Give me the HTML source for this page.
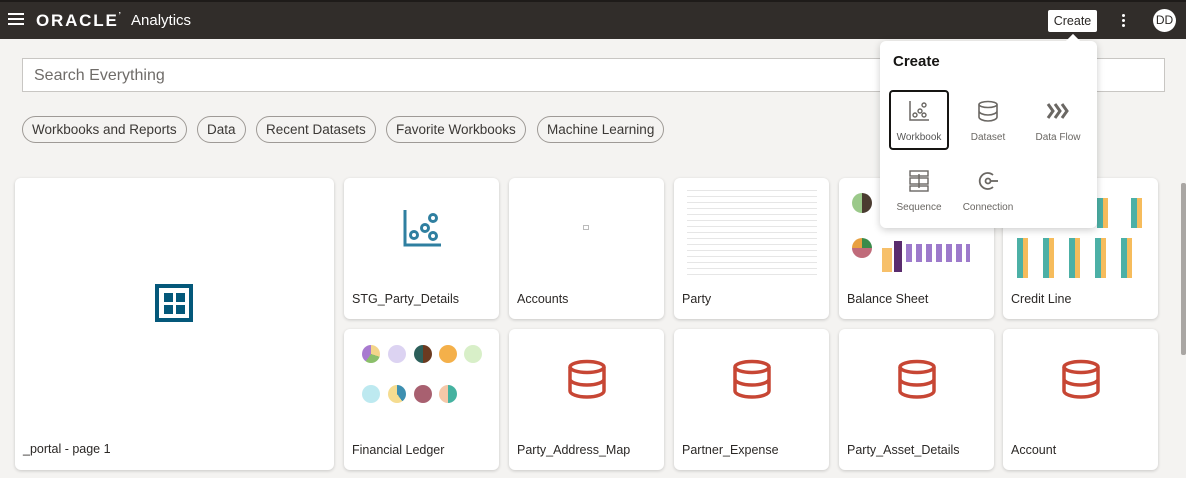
<!DOCTYPE html>
<html><head><meta charset="utf-8"><style>
*{box-sizing:border-box;margin:0;padding:0}
body{width:1186px;height:478px;overflow:hidden;background:#f4f3f1;font-family:"Liberation Sans",sans-serif;position:relative;color:#161513}
.abs{position:absolute}
.hdr{left:0;top:0;width:1186px;height:39px;background:#312d2a;border-top:2px solid #1e1b19}
.search{left:22px;top:58px;width:1143px;height:34px;background:#fff;border:1px solid #c8c6c3;font-size:16px;color:#6f6c69;padding:8px 11px}
.chip{top:116px;height:27px;border:1px solid #9e9a96;border-radius:14px;font-size:13.5px;color:#3b3835;padding:5px 9px;background:#f4f3f1;white-space:nowrap}
.card{background:#fff;border-radius:6px;box-shadow:0 1px 3px rgba(0,0,0,.18)}
.lbl{position:absolute;left:8px;font-size:12.5px;color:#2b2826}
.sm .lbl{top:114px}
.pop{left:880px;top:41px;width:217px;height:187px;background:#fff;border-radius:6px;box-shadow:0 2px 8px rgba(0,0,0,.2)}
.tile{position:absolute;width:60px;height:60px;text-align:center;font-size:10px;color:#6a6763}
.tile svg{display:block;margin:10px auto 10px}
</style></head><body>
<div class="abs hdr">
 <div class="abs" style="left:8px;top:11px;width:16px;height:2px;background:#fff;box-shadow:0 5px 0 #fff,0 10px 0 #fff"></div>
 <div class="abs" style="left:36px;top:9px;color:#fff;font-size:17px;font-weight:bold;letter-spacing:1.8px">ORACLE<span style="font-size:8px;vertical-align:top">’</span></div>
 <div class="abs" style="left:131px;top:10px;color:#fff;font-size:15px">Analytics</div>
 <div class="abs" style="left:1048px;top:8px;width:49px;height:22px;background:#fff;border-radius:2px;font-size:12.5px;color:#2b2826;text-align:center;line-height:22px">Create</div>
 <div class="abs" style="left:1122px;top:12px;width:3px;height:3px;background:#fff;border-radius:2px;box-shadow:0 5px 0 #fff,0 10px 0 #fff"></div>
 <div class="abs" style="left:1153px;top:7px;width:23px;height:23px;background:#fff;border-radius:50%;font-size:12px;text-align:center;line-height:23px;color:#2b2826">DD</div>
</div>
<div class="abs search">Search Everything</div>
<div class="abs chip" style="left:22px">Workbooks and Reports</div>
<div class="abs chip" style="left:197px">Data</div>
<div class="abs chip" style="left:256px">Recent Datasets</div>
<div class="abs chip" style="left:386px">Favorite Workbooks</div>
<div class="abs chip" style="left:537px">Machine Learning</div>

<div class="abs card" style="left:15px;top:178px;width:319px;height:292px">
 <svg class="abs" style="left:140px;top:106px" width="39" height="38"><rect x="2" y="2" width="34" height="34" fill="none" stroke="#04587a" stroke-width="4"/><rect x="9" y="9" width="9" height="9" fill="#04587a"/><rect x="21" y="9" width="9" height="9" fill="#04587a"/><rect x="9" y="21" width="9" height="9" fill="#04587a"/><rect x="21" y="21" width="9" height="9" fill="#04587a"/></svg>
 <div class="lbl" style="top:264px">_portal - page 1</div>
</div>

<div class="abs card sm" style="left:344px;top:178px;width:155px;height:141px">
 <svg class="abs" style="left:58px;top:30px" width="40" height="40"><path d="M3 2V37H39" fill="none" stroke="#2f7fa0" stroke-width="3"/><g fill="none" stroke="#2f7fa0" stroke-width="3"><circle cx="12" cy="27" r="3.5"/><circle cx="23" cy="20" r="3.5"/><circle cx="31" cy="10" r="3.5"/><circle cx="31" cy="28" r="3.5"/></g></svg>
 <div class="lbl">STG_Party_Details</div></div>
<div class="abs card sm" style="left:509px;top:178px;width:155px;height:141px">
 <div class="abs" style="left:74px;top:47px;width:6px;height:5px;border:1px solid #bbb"></div>
 <div class="lbl">Accounts</div></div>
<div class="abs card sm" style="left:674px;top:178px;width:155px;height:141px">
 <div class="abs" style="left:13px;top:7px;width:130px;height:92px;background:repeating-linear-gradient(#fff 0 5px,#e6e6e6 5px 6px)"></div>
 <div class="lbl">Party</div></div>
<div class="abs card sm" style="left:839px;top:178px;width:155px;height:141px">
 <div class="abs" style="left:13px;top:15px;width:20px;height:20px;border-radius:50%;background:conic-gradient(#4a3b30 0 50%,#9bc98a 0)"></div>
 <div class="abs" style="left:13px;top:60px;width:20px;height:20px;border-radius:50%;background:conic-gradient(#3a8b4a 0 25%,#c06b7a 0 75%,#e8a040 0)"></div>
 <div class="abs" style="left:43px;top:70px;width:10px;height:24px;background:#f7c06a"></div>
 <div class="abs" style="left:55px;top:63px;width:8px;height:31px;background:#5a2c6e"></div>
 <div class="abs" style="left:67px;top:66px;width:64px;height:18px;background:repeating-linear-gradient(90deg,#9d7acb 0 6px,transparent 6px 10px)"></div>
 <div class="lbl">Balance Sheet</div></div>
<div class="abs card sm" style="left:1003px;top:178px;width:155px;height:141px">
 <div class="abs" style="left:14px;top:60px;width:130px;height:40px;background:repeating-linear-gradient(90deg,#4cb0a6 0 6px,#f6bc5c 6px 11px,transparent 11px 26px)"></div>
 <div class="abs" style="left:14px;top:20px;width:130px;height:30px;background:repeating-linear-gradient(90deg,transparent 0 12px,#4cb0a6 12px 18px,#f6bc5c 18px 23px,transparent 23px 34px)"></div>
 <div class="lbl">Credit Line</div></div>

<div class="abs card sm" style="left:344px;top:329px;width:155px;height:141px">
 <div class="abs" style="left:18px;top:16px;width:18px;height:18px;border-radius:50%;background:conic-gradient(#f3d58a 0 30%,#8bbf6a 0 60%,#a87ad0 0)"></div>
 <div class="abs" style="left:44px;top:16px;width:18px;height:18px;border-radius:50%;background:#dcd3f2"></div>
 <div class="abs" style="left:70px;top:16px;width:18px;height:18px;border-radius:50%;background:conic-gradient(#6b3a20 0 50%,#2c5f5a 0)"></div>
 <div class="abs" style="left:95px;top:16px;width:18px;height:18px;border-radius:50%;background:#f4b04a"></div>
 <div class="abs" style="left:120px;top:16px;width:18px;height:18px;border-radius:50%;background:#d8efc8"></div>
 <div class="abs" style="left:18px;top:56px;width:18px;height:18px;border-radius:50%;background:#bde9f0"></div>
 <div class="abs" style="left:44px;top:56px;width:18px;height:18px;border-radius:50%;background:conic-gradient(#3d8fb0 0 40%,#f5dc90 0)"></div>
 <div class="abs" style="left:70px;top:56px;width:18px;height:18px;border-radius:50%;background:#a86070"></div>
 <div class="abs" style="left:95px;top:56px;width:18px;height:18px;border-radius:50%;background:conic-gradient(#45b2a0 0 50%,#f5c8a8 0)"></div>
 <div class="lbl">Financial Ledger</div></div>
<div class="abs card sm" style="left:509px;top:329px;width:155px;height:141px"><svg class="abs" style="left:58px;top:30px" width="40" height="40"><g fill="none" stroke="#c74634" stroke-width="3.5"><ellipse cx="20" cy="8" rx="17" ry="5.5"/><path d="M3 8V32C3 35 10 38 20 38S37 35 37 32V8M3 20C3 23 10 26 20 26S37 23 37 20"/></g></svg><div class="lbl">Party_Address_Map</div></div>
<div class="abs card sm" style="left:674px;top:329px;width:155px;height:141px"><svg class="abs" style="left:58px;top:30px" width="40" height="40"><g fill="none" stroke="#c74634" stroke-width="3.5"><ellipse cx="20" cy="8" rx="17" ry="5.5"/><path d="M3 8V32C3 35 10 38 20 38S37 35 37 32V8M3 20C3 23 10 26 20 26S37 23 37 20"/></g></svg><div class="lbl">Partner_Expense</div></div>
<div class="abs card sm" style="left:839px;top:329px;width:155px;height:141px"><svg class="abs" style="left:58px;top:30px" width="40" height="40"><g fill="none" stroke="#c74634" stroke-width="3.5"><ellipse cx="20" cy="8" rx="17" ry="5.5"/><path d="M3 8V32C3 35 10 38 20 38S37 35 37 32V8M3 20C3 23 10 26 20 26S37 23 37 20"/></g></svg><div class="lbl">Party_Asset_Details</div></div>
<div class="abs card sm" style="left:1003px;top:329px;width:155px;height:141px"><svg class="abs" style="left:58px;top:30px" width="40" height="40"><g fill="none" stroke="#c74634" stroke-width="3.5"><ellipse cx="20" cy="8" rx="17" ry="5.5"/><path d="M3 8V32C3 35 10 38 20 38S37 35 37 32V8M3 20C3 23 10 26 20 26S37 23 37 20"/></g></svg><div class="lbl">Account</div></div>

<div class="abs" style="left:1181px;top:183px;width:5px;height:172px;background:#a9a6a3;border-radius:2px"></div>

<div class="abs pop">
 <div class="abs" style="left:188px;top:-5px;width:10px;height:10px;background:#fff;transform:rotate(45deg)"></div>
 <div class="abs" style="left:13px;top:12px;font-size:15px;font-weight:bold">Create</div>
 <div class="tile" style="left:9px;top:49px;border:2px solid #161513;border-radius:4px;color:#555"><svg width="22" height="22" style="margin-top:8px"><path d="M2 1V20H21" fill="none" stroke="#6a6763" stroke-width="1.5"/><g fill="none" stroke="#6a6763" stroke-width="1.4"><circle cx="7" cy="15" r="2"/><circle cx="12" cy="11" r="2"/><circle cx="16" cy="5" r="2"/><circle cx="16" cy="15" r="2"/></g></svg>Workbook</div>
 <div class="tile" style="left:78px;top:49px"><svg width="22" height="22"><g fill="none" stroke="#6a6763" stroke-width="1.6"><ellipse cx="11" cy="4.5" rx="9" ry="3"/><path d="M2 4.5V17C2 19 6 21 11 21S20 19 20 17V4.5M2 11C2 13 6 15 11 15S20 13 20 11"/></g></svg>Dataset</div>
 <div class="tile" style="left:148px;top:49px;width:60px"><svg width="24" height="22"><path d="M2 4L7 11L2 18M9 4L14 11L9 18M16 4L21 11L16 18" fill="none" stroke="#6a6763" stroke-width="3"/></svg>Data Flow</div>
 <div class="tile" style="left:9px;top:119px"><svg width="22" height="22"><g fill="none" stroke="#6a6763" stroke-width="1.4"><rect x="2" y="1" width="18" height="5"/><rect x="2" y="8" width="18" height="6"/><rect x="2" y="16" width="18" height="5"/><path d="M11 4V18"/></g></svg>Sequence</div>
 <div class="tile" style="left:78px;top:119px"><svg width="22" height="22"><g fill="none" stroke="#6a6763" stroke-width="1.8"><path d="M16 5A8 8 0 1 0 16 17"/><circle cx="11" cy="11" r="2.5"/><path d="M13.5 11H21"/></g></svg>Connection</div>
</div>
</body></html>
